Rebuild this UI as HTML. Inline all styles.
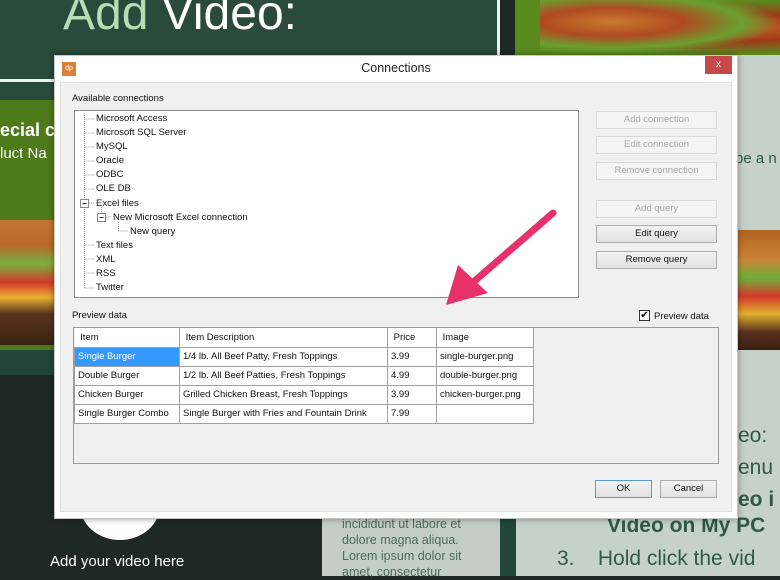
<!DOCTYPE html>
<html><head><meta charset="utf-8"><style>
*{margin:0;padding:0;box-sizing:border-box}
body{width:780px;height:576px;overflow:hidden;position:relative;background:#1e2926;font-family:"Liberation Sans",sans-serif}
.a{position:absolute}
.t{font-size:9.5px;color:#111;white-space:nowrap}
.tr div{height:14.1px}
.btn{position:absolute;left:596px;width:121px;height:18px;border:1px solid #adadad;background:linear-gradient(#f2f2f2,#e2e2e2);font-size:9.5px;text-align:center;line-height:16px;color:#111}
.dis{border-color:#d9d9d9;background:#f4f4f4;color:#a8a8a8}
table{border-collapse:collapse;font-size:9.5px;color:#111}
td{border:1px solid #a0a0a0;height:19px;padding:0 3px;white-space:nowrap;background:#fff}
</style></head><body>
<div class="a" style="left:0;top:0;width:500px;height:85px;background:#2a4a3c"></div>
<div class="a" style="left:0;top:79px;width:500px;height:3px;background:#f0f0f0"></div>
<div class="a" style="left:497px;top:0;width:3px;height:82px;background:#f0f0f0"></div>
<div class="a" style="left:63px;top:-14px;font-size:48px;color:#fff;white-space:nowrap"><span style="color:#b9dcb4">Add</span> Video:</div>
<div class="a" style="left:500px;top:55px;width:280px;height:521px;background:#c7d1cb"></div>
<div class="a" style="left:515px;top:0;width:265px;height:55px;background:#5a8a1e"></div>
<div class="a" style="left:540px;top:0;width:240px;height:55px;background:radial-gradient(ellipse at 30% 40%,#c97a30 0,#b04a20 30%,#6aa030 55%,transparent 70%),radial-gradient(ellipse at 80% 50%,#c06a28 0,#a03a1a 35%,#5a8a1e 70%)"></div>
<div class="a" style="left:500px;top:400px;width:16px;height:176px;background:#22473a"></div>
<div class="a" style="left:735px;top:150px;font-size:15px;color:#2d5a48">be a n</div>
<div class="a" style="left:738px;top:230px;width:42px;height:120px;background:linear-gradient(#b0641e 0,#c9853a 25%,#6fae3a 40%,#d43a2a 55%,#e0b030 70%,#5a3020 85%,#3a2010 100%)"></div>
<div class="a" style="left:0;top:85px;width:55px;height:15px;background:#2a4a3c"></div>
<div class="a" style="left:0;top:100px;width:55px;height:250px;background:#4f7a1a"></div>
<div class="a" style="left:0;top:120px;font-size:18px;font-weight:bold;color:#fff">ecial c</div>
<div class="a" style="left:0;top:145px;font-size:15px;color:#fff">luct Na</div>
<div class="a" style="left:0;top:220px;width:55px;height:125px;background:linear-gradient(#c27535 0,#b86a2a 20%,#7ab040 35%,#d23a2a 50%,#e8b030 62%,#5a3420 75%,#3a2212 100%)"></div>
<div class="a" style="left:0;top:350px;width:55px;height:25px;background:#22473a"></div>
<div class="a" style="left:80px;top:470px;width:80px;height:70px;border-radius:50%;background:#fff"></div>
<div class="a" style="left:50px;top:553px;font-size:15px;color:#fff">Add your video here</div>
<div class="a" style="left:322px;top:518px;width:178px;height:58px;background:#c5cdc8"></div>
<div class="a" style="left:342px;top:516px;font-size:12.5px;line-height:16px;color:#4a6a5c">incididunt ut labore et<br>dolore magna aliqua.<br>Lorem ipsum dolor sit<br>amet, consectetur</div>
<div class="a" style="left:738px;top:420px;font-size:21px;line-height:32px;color:#2f5a48;white-space:nowrap">eo:<br>enu<br><b>eo i</b></div>
<div class="a" style="left:607px;top:514px;font-size:21px;font-weight:bold;color:#2f5a48;white-space:nowrap">Video on My PC</div>
<div class="a" style="left:557px;top:547px;font-size:21px;color:#2f5a48;white-space:nowrap">3.&nbsp;&nbsp;&nbsp; Hold click the vid</div>
<div class="a" style="left:54px;top:55px;width:684px;height:464px;background:#fff;border:1px solid #c8c8c8;box-shadow:0 0 6px rgba(0,0,0,.4)"></div>
<div class="a" style="left:62px;top:62px;width:14px;height:14px;background:#d9823a;color:#fff;font-size:7px;line-height:14px;text-align:center">dp</div>
<div class="a" style="left:0;top:61px;width:792px;text-align:center;font-size:12.5px;color:#222">Connections</div>
<div class="a" style="left:705px;top:56px;width:27px;height:18px;background:#c74a4a;color:#fff;font-size:10px;text-align:center;line-height:18px">x</div>
<div class="a" style="left:60px;top:82px;width:672px;height:430px;background:#f0f0f0;border:1px solid #e0e0e0"></div>
<div class="a t" style="left:72px;top:93px">Available connections</div>
<div class="a" style="left:74px;top:110px;width:505px;height:188px;background:#fff;border:1px solid #8a8a8a"></div>
<svg class="a" style="left:74px;top:110px" width="120" height="188">
<g stroke="#999" stroke-dasharray="1,1" fill="none">
<path d="M10.5 5V179M10.5 9H21M10.5 23H21M10.5 37H21M10.5 51H21M10.5 65H21M10.5 79H21M13 93H21M10.5 135H21M10.5 149H21M10.5 163H21M10.5 178H21M27.5 97V104M30 107H38M44.5 112V121M44.5 121H54"/>
</g>
<rect x="6.5" y="89.5" width="8" height="8" fill="#fff" stroke="#888"/><path d="M8.5 93.5h4" stroke="#333"/>
<rect x="23.5" y="103.5" width="8" height="8" fill="#fff" stroke="#888"/><path d="M25.5 107.5h4" stroke="#333"/>
</svg>
<div class="a t tr" style="left:96px;top:112px;line-height:14.1px">
<div>Microsoft Access</div><div>Microsoft SQL Server</div><div>MySQL</div><div>Oracle</div><div>ODBC</div><div>OLE DB</div><div>Excel files</div><div style="padding-left:17px">New Microsoft Excel connection</div><div style="padding-left:34px">New query</div><div>Text files</div><div>XML</div><div>RSS</div><div>Twitter</div></div>
<div class="btn dis" style="top:111px">Add connection</div>
<div class="btn dis" style="top:136px">Edit connection</div>
<div class="btn dis" style="top:162px">Remove connection</div>
<div class="btn dis" style="top:200px">Add query</div>
<div class="btn" style="top:225px">Edit query</div>
<div class="btn" style="top:251px">Remove query</div>
<div class="a t" style="left:72px;top:310px">Preview data</div>
<div class="a" style="left:639px;top:310px;width:11px;height:11px;border:1px solid #333;background:#fff;font-size:10px;line-height:9px;text-align:center">✔</div>
<div class="a t" style="left:654px;top:311px">Preview data</div>
<div class="a" style="left:73px;top:327px;width:646px;height:137px;border:1px solid #9a9a9a;background:#f0f0f0"></div>
<table class="a" style="left:74px;top:328px">
<tr><td style="width:105px;border-left:0;border-top:0">&nbsp;Item</td><td style="width:208px;border-top:0">&nbsp;Item Description</td><td style="width:49px;border-top:0">&nbsp;Price</td><td style="width:97px;border-top:0">&nbsp;Image</td></tr>
<tr><td style="background:#3399ff;color:#fff">Single Burger</td><td>1/4 lb. All Beef Patty, Fresh Toppings</td><td>3.99</td><td>single-burger.png</td></tr>
<tr><td>Double Burger</td><td>1/2 lb. All Beef Patties, Fresh Toppings</td><td>4.99</td><td>double-burger.png</td></tr>
<tr><td>Chicken Burger</td><td>Grilled Chicken Breast, Fresh Toppings</td><td>3.99</td><td>chicken-burger.png</td></tr>
<tr><td>Single Burger Combo</td><td>Single Burger with Fries and Fountain Drink</td><td>7.99</td><td></td></tr>
</table>
<div class="btn" style="left:595px;top:480px;width:57px;border-color:#5a9ad8">OK</div>
<div class="btn" style="left:660px;top:480px;width:57px">Cancel</div>
<svg class="a" style="left:440px;top:205px" width="120" height="105">
<path d="M113 8 L30 80" stroke="#e8306a" stroke-width="7" stroke-linecap="round"/>
<path d="M6 100 L18 60 L48 88 Z" fill="#e8306a"/>
</svg>
</body></html>
